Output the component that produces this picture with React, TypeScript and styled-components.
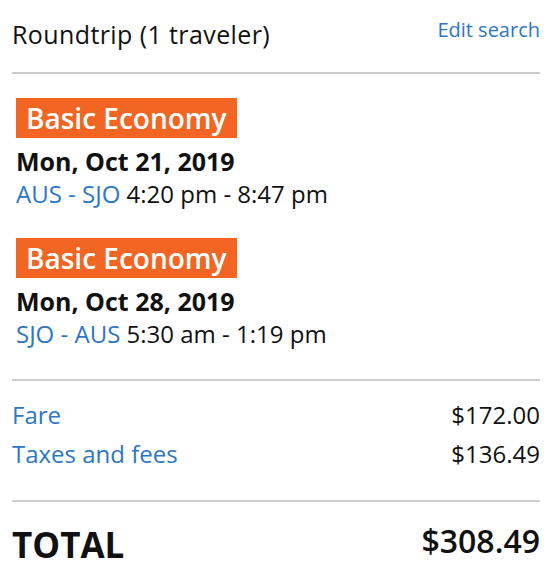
import React from "react";
import styled, { createGlobalStyle } from "styled-components";

const GlobalStyle = createGlobalStyle`
  body {
    margin: 0;
    background: #fff;
    font-family: "Open Sans", "Liberation Sans", sans-serif;
    color: #111;
  }
`;

const Summary = styled.div`
  width: 556px;
  box-sizing: border-box;
  padding: 0 16px 0 12px;
`;

const Header = styled.div`
  display: flex;
  justify-content: space-between;
  align-items: flex-start;
  padding: 18px 0 22px;
  border-bottom: 2px solid #cccccc;
`;

const Title = styled.div`
  font-size: 25px;
  letter-spacing: 0.4px;
  line-height: 32px;
`;

const EditLink = styled.a`
  font-size: 20px;
  line-height: 24px;
  color: #2b77c2;
  text-decoration: none;
  cursor: pointer;
`;

const Segments = styled.div`
  display: flex;
  flex-direction: column;
  gap: 32px;
  padding: 24px 4px 33px;
  border-bottom: 2px solid #cccccc;
`;

const Segment = styled.div`
  display: flex;
  flex-direction: column;
  align-items: flex-start;
`;

const Badge = styled.span`
  background: #f26522;
  color: #fff;
  font-size: 28px;
  font-weight: 600;
  line-height: 40px;
  padding: 0 10px;
`;

const Date = styled.div`
  font-size: 25px;
  font-weight: 700;
  line-height: 42px;
  padding-top: 2px;
`;

const Route = styled.div`
  font-size: 24px;
  line-height: 24px;
`;

const Airports = styled.span`
  color: #2b77c2;
`;

const Charges = styled.div`
  display: flex;
  flex-direction: column;
  padding: 14px 0 27px;
  border-bottom: 2px solid #cccccc;
`;

const ChargeRow = styled.div`
  display: flex;
  justify-content: space-between;
  font-size: 24px;
  line-height: 39px;
`;

const ChargeLabel = styled.span`
  color: #2b77c2;
`;

const TotalRow = styled.div`
  display: flex;
  justify-content: space-between;
  align-items: flex-start;
  padding-top: 19px;
`;

const TotalLabel = styled.span`
  font-size: 35px;
  font-weight: 700;
  line-height: 48px;
`;

const TotalAmount = styled.span`
  font-size: 32px;
  font-weight: 600;
  line-height: 40px;
`;

const segments = [
  { date: "Mon, Oct 21, 2019", route: "AUS - SJO", time: "4:20 pm - 8:47 pm" },
  { date: "Mon, Oct 28, 2019", route: "SJO - AUS", time: "5:30 am - 1:19 pm" },
];

const charges = [
  { label: "Fare", amount: "$172.00" },
  { label: "Taxes and fees", amount: "$136.49" },
];

const App = () => (
  <>
    <GlobalStyle />
    <Summary>
      <Header>
        <Title>Roundtrip (1 traveler)</Title>
        <EditLink>Edit search</EditLink>
      </Header>
      <Segments>
        {segments.map((s, i) => (
          <Segment key={i}>
            <Badge>Basic Economy</Badge>
            <Date>{s.date}</Date>
            <Route>
              <Airports>{s.route}</Airports> {s.time}
            </Route>
          </Segment>
        ))}
      </Segments>
      <Charges>
        {charges.map((c, i) => (
          <ChargeRow key={i}>
            <ChargeLabel>{c.label}</ChargeLabel>
            <span>{c.amount}</span>
          </ChargeRow>
        ))}
      </Charges>
      <TotalRow>
        <TotalLabel>TOTAL</TotalLabel>
        <TotalAmount>$308.49</TotalAmount>
      </TotalRow>
    </Summary>
  </>
);

export default App;
